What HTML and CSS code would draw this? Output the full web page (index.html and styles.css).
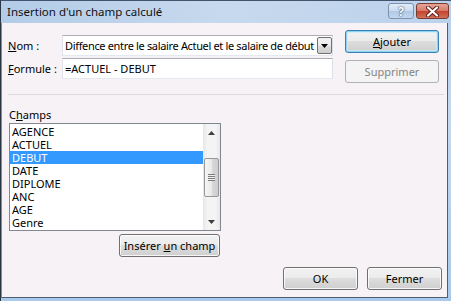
FILE: index.html
```html
<!DOCTYPE html>
<html lang="fr">
<head>
    <meta charset="UTF-8">
    <title>Insertion d'un champ calculé</title>
    <link rel="stylesheet" href="styles.css">
</head>
<body>
    <div class="window">
        <div class="titlebar">
            <span class="title">Insertion d'un champ calculé</span>
            <div class="caption-btns">
                <span class="cap-btn help">?</span>
                <span class="cap-btn close">
                    <svg width="13" height="11" viewBox="0 0 13 11"><path d="M2 1.5 L11 9.5 M11 1.5 L2 9.5" stroke="#5a1e14" stroke-width="4" stroke-linecap="round"/><path d="M2 1.5 L11 9.5 M11 1.5 L2 9.5" stroke="#fff" stroke-width="2.2" stroke-linecap="round"/></svg>
                </span>
            </div>
        </div>
        <div class="client">
            <div class="top">
                <div class="fields">
                    <div class="row">
                        <label><u>N</u>om :</label>
                        <div class="combo">
                            <span class="combo-text">Diffence entre le salaire Actuel et le salaire de début</span>
                            <span class="combo-btn"><svg width="7" height="4" viewBox="0 0 7 4"><path d="M0 0 L7 0 L3.5 4Z" fill="#000"/></svg></span>
                        </div>
                    </div>
                    <div class="row">
                        <label><u>F</u>ormule :</label>
                        <div class="textbox">=ACTUEL - DEBUT</div>
                    </div>
                </div>
                <div class="side-btns">
                    <button class="btn default"><u>A</u>jouter</button>
                    <button class="btn" disabled>Supprimer</button>
                </div>
            </div>
            <div class="sep"></div>
            <div class="champs">
                <div class="champs-label">C<u>h</u>amps</div>
                <div class="listbox">
                    <ul class="items">
                        <li>AGENCE</li>
                        <li>ACTUEL</li>
                        <li class="selected">DEBUT</li>
                        <li>DATE</li>
                        <li>DIPLOME</li>
                        <li>ANC</li>
                        <li>AGE</li>
                        <li>Genre</li>
                    </ul>
                    <div class="scrollbar">
                        <div class="sb-arrow"><svg width="7" height="4" viewBox="0 0 7 4"><path d="M0 4 L3.5 0 L7 4Z" fill="#404040"/></svg></div>
                        <div class="sb-track">
                            <div class="sb-thumb"><span class="grip"></span></div>
                        </div>
                        <div class="sb-arrow"><svg width="7" height="4" viewBox="0 0 7 4"><path d="M0 0 L7 0 L3.5 4Z" fill="#404040"/></svg></div>
                    </div>
                </div>
                <div class="insert-row">
                    <button class="btn insert">Insérer <u>u</u>n champ</button>
                </div>
            </div>
            <div class="footer">
                <button class="btn">OK</button>
                <button class="btn">Fermer</button>
            </div>
        </div>
    </div>
</body>
</html>
```

FILE: styles.css
```css
/* page */
html, body {
    margin: 0;
    padding: 0;
}
body {
    font-family: "Noto Sans", "Open Sans", sans-serif;
    font-size: 11px;
    color: #000;
}

/* fenêtre Vista */
.window {
    width: 451px;
    height: 301px;
    box-sizing: border-box;
    border-top: 1px solid #41546c;
    border-left: 1px solid #2b3644;
    padding: 0 3px 3px 0;
    background: linear-gradient(#b6cfe9, #c6d9ef 40%, #a9c9ea);
    display: flex;
    flex-direction: column;
}
.titlebar {
    height: 22px;
    display: flex;
    justify-content: space-between;
    align-items: flex-start;
    background: linear-gradient(90deg, #b3cce7, #c7d9ee 50%, #bcd2eb);
}
.title {
    padding: 4px 0 0 6px;
    line-height: 14px;
    font-size: 11.5px;
    color: #111;
}
.caption-btns {
    display: flex;
    gap: 2px;
    padding-top: 2px;
    margin-right: -1px;
}
.cap-btn {
    height: 16px;
    box-sizing: border-box;
    border-radius: 3px;
    display: flex;
    align-items: center;
    justify-content: center;
}
.help {
    width: 26px;
    border: 1px solid #7b93b2;
    background: linear-gradient(#e3ecf6, #cbdbee 50%, #b1c8e4 50%, #c3d6ee);
    color: #fff;
    font-weight: bold;
    font-size: 12px;
    text-shadow: 0 0 2px #34496a, 0 0 1px #34496a;
}
.close {
    width: 33px;
    border: 1px solid #7a3a30;
    background: linear-gradient(#e6a597, #d8786a 50%, #c4412d 50%, #d0705a);
}

/* zone cliente */
.client {
    flex: 1;
    background: #f6f2f6;
    border-left: 1px solid #7f8fa3;
    border-right: 1px solid #4c5e74;
    border-bottom: 1px solid #4c5e74;
}
.top {
    display: flex;
    padding: 7px 0 0 6px;
}
.fields {
    margin-top: 5px;
    display: flex;
    flex-direction: column;
    gap: 2px;
}
.row {
    display: flex;
    align-items: center;
    height: 21px;
}
.row label {
    width: 54px;
}
.combo, .textbox {
    width: 271px;
    height: 21px;
    box-sizing: border-box;
    border: 1px solid #abadb3;
    border-left-color: #e2e3ea;
    border-right-color: #dbdfe6;
    border-bottom-color: #e3e9ef;
    background: #fff;
    display: flex;
    align-items: center;
    padding-left: 2px;
    white-space: nowrap;
    overflow: hidden;
}
.combo-text {
    flex: 1;
    overflow: hidden;
    letter-spacing: -0.34px;
}
.combo-btn {
    width: 15px;
    height: 17px;
    box-sizing: border-box;
    border: 1px solid #707070;
    border-radius: 2px;
    background: linear-gradient(#f2f2f2, #ebebeb 50%, #dddddd 50%, #cfcfcf);
    display: flex;
    align-items: center;
    justify-content: center;
    flex-shrink: 0;
}
.side-btns {
    margin-left: 12px;
    display: flex;
    flex-direction: column;
    gap: 7px;
}
.side-btns .btn {
    width: 94px;
}

/* boutons */
.btn {
    font-family: inherit;
    font-size: 11px;
    color: #000;
    width: 75px;
    height: 23px;
    padding: 0;
    white-space: nowrap;
    border: 1px solid #707070;
    border-radius: 3px;
    background: linear-gradient(#f2f2f2, #ebebeb 50%, #dddddd 50%, #cfcfcf);
    box-shadow: inset 0 0 0 1px rgba(255, 255, 255, 0.8);
}
.btn.default {
    border-color: #3c7fb1;
    box-shadow: inset 0 0 0 1px #8ed3f4, inset 0 0 0 2px rgba(200, 236, 252, 0.7);
}
.btn:disabled {
    border-color: #adb2b5;
    background: #f4f4f4;
    color: #838383;
    box-shadow: none;
}

.sep {
    height: 1px;
    margin: 11px 3px 0 6px;
    background: #dcdcdc;
}

/* liste des champs */
.champs {
    padding-left: 7px;
    width: 212px;
}
.champs-label {
    margin-top: 13px;
    line-height: 14px;
}
.listbox {
    margin-top: 1px;
    height: 108px;
    box-sizing: border-box;
    border: 1px solid #828790;
    background: #fff;
    display: flex;
}
.items {
    flex: 1;
    list-style: none;
    margin: 0;
    padding: 1px 0 0 0;
}
.items li {
    height: 13px;
    line-height: 13px;
    padding-left: 2px;
}
.items li.selected {
    background: #3399ff;
    color: #fff;
}
.scrollbar {
    width: 17px;
    display: flex;
    flex-direction: column;
    background: linear-gradient(90deg, #e6e6e6, #f4f4f4 25%, #f4f4f4 75%, #e8e8e8);
}
.sb-arrow {
    height: 17px;
    display: flex;
    align-items: center;
    justify-content: center;
}
.sb-track {
    flex: 1;
    padding-top: 17px;
}
.sb-thumb {
    height: 39px;
    margin: 0 1px;
    box-sizing: border-box;
    border: 1px solid #979797;
    border-radius: 2px;
    background: linear-gradient(90deg, #f6f6f6, #e9e9e9 50%, #d9d9d9 50%, #cdcdcd);
    display: flex;
    align-items: center;
    justify-content: center;
}
.grip {
    width: 7px;
    height: 7px;
    background: repeating-linear-gradient(#7c7c7c 0 1px, #f0f0f0 1px 2px);
}
.insert-row {
    display: flex;
    justify-content: flex-end;
    padding-right: 1px;
}
.btn.insert {
    width: 101px;
    margin-top: 3px;
}

/* boutons du bas */
.footer {
    display: flex;
    justify-content: flex-end;
    gap: 9px;
    margin-top: 10px;
    padding-right: 5px;
}
```
